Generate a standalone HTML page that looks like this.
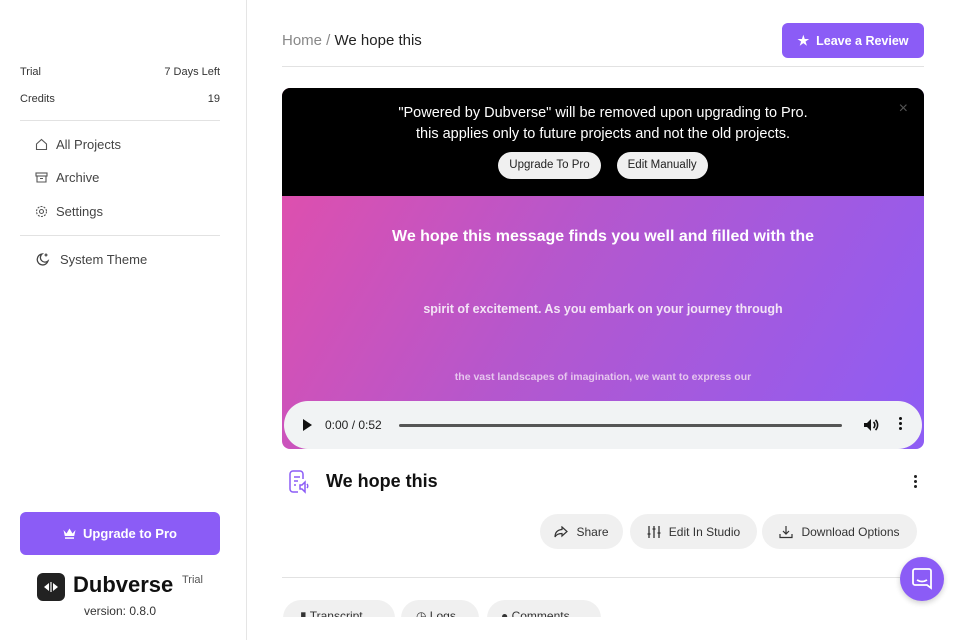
<!DOCTYPE html>
<html><head><meta charset="utf-8"><style>
*{box-sizing:border-box;margin:0;padding:0}
body{width:960px;height:640px;overflow:hidden;background:#fff;font-family:"Liberation Sans",sans-serif;color:#222;position:relative}
.side{position:absolute;left:0;top:0;width:247px;height:640px;border-right:1px solid #e5e5e5}
.row{position:absolute;left:20px;width:200px;font-size:11px;color:#333;display:flex;justify-content:space-between}
.hr{position:absolute;left:20px;width:200px;height:1px;background:#e2e2e2}
.nav{position:absolute;left:35px;font-size:13px;color:#444;display:flex;align-items:center;gap:8px}
.upg{position:absolute;left:20px;top:512px;width:200px;height:43px;background:#8b5cf6;border-radius:6px;color:#fff;font-weight:bold;font-size:13px;display:flex;align-items:center;justify-content:center;gap:7px}
.main{position:absolute;left:282px;width:642px}
.pill{position:absolute;height:35px;border-radius:18px;background:#f0f0f0;font-size:12px;color:#333;display:flex;align-items:center;justify-content:center;gap:8px}
.bb{background:#f0f0f0;color:#222;border-radius:14px;font-size:11.5px;padding:0 11px;height:27px;display:flex;align-items:center}
</style></head><body>
<div class="side">
 <div class="row" style="top:66px"><span>Trial</span><span>7 Days Left</span></div>
 <div class="row" style="top:93px"><span>Credits</span><span>19</span></div>
 <div class="hr" style="top:120px"></div>
 <div class="nav" style="top:137px"><svg width="13" height="13" viewBox="0 0 13 13" fill="none" stroke="#555" stroke-width="1.1"><path d="M1.5 6L6.5 1.5 11.5 6V11.5H1.5Z"/></svg>All Projects</div>
 <div class="nav" style="top:170px"><svg width="13" height="13" viewBox="0 0 13 13" fill="none" stroke="#555" stroke-width="1.1"><rect x="1" y="2" width="11" height="3"/><path d="M2 5v6h9V5M5 7.5h3"/></svg>Archive</div>
 <div class="nav" style="top:204px"><svg width="13" height="13" viewBox="0 0 13 13" fill="none" stroke="#555" stroke-width="1.1"><circle cx="6.5" cy="6.5" r="2"/><circle cx="6.5" cy="6.5" r="5" stroke-dasharray="2 1.2"/></svg>Settings</div>
 <div class="hr" style="top:235px"></div>
 <div class="nav" style="top:252px;gap:10px"><svg width="15" height="15" viewBox="0 0 15 15" fill="none" stroke="#444" stroke-width="1.3"><path d="M7 2a5.5 5.5 0 1 0 6 7A4.5 4.5 0 0 1 7 2Z"/><path d="M11 1.5v3M9.5 3h3"/></svg>System Theme</div>
 <div class="upg"><svg width="13" height="11" viewBox="0 0 13 11" fill="#fff"><path d="M0.5 2l3 3.5L6.5 0.5l3 5 3-3.5-1.3 6H1.8Z"/><rect x="2" y="9.3" width="9" height="1.5"/></svg>Upgrade to Pro</div>
 <div style="position:absolute;left:37px;top:573px;width:28px;height:28px;background:#222;border-radius:6px"><svg width="28" height="28" viewBox="0 0 28 28" fill="#fff"><path d="M12 10v8l-5-4zM16 10v8l5-4z"/><rect x="13.4" y="9" width="1.2" height="10"/></svg></div>
 <div style="position:absolute;left:73px;top:572px;font-size:22px;font-weight:bold;color:#111">Dubverse</div>
 <div style="position:absolute;left:182px;top:574px;font-size:11px;color:#555">Trial</div>
 <div style="position:absolute;left:0;width:240px;text-align:center;top:604px;font-size:12px;color:#333">version: 0.8.0</div>
</div>

<div class="main" style="top:32px;font-size:15px"><span style="color:#888">Home /</span> <span style="color:#222">We hope this</span></div>
<div style="position:absolute;left:782px;top:23px;width:142px;height:35px;background:#8b5cf6;border-radius:6px;color:#fff;font-weight:bold;font-size:12.5px;display:flex;align-items:center;justify-content:center;gap:7px"><span style="font-size:13px">★</span>Leave a Review</div>
<div class="main" style="top:66px;height:1px;background:#e2e2e2"></div>

<div class="main" style="top:88px;height:361px;border-radius:8px;overflow:hidden;background:linear-gradient(120deg,#e54ea8 0%,#b557cd 45%,#8d5df5 100%)">
 <div style="height:108px;background:#000;color:#fff;text-align:center;font-size:14.5px;line-height:21px;padding-top:15px;position:relative">
  "Powered by Dubverse" will be removed upon upgrading to Pro.<br>this applies only to future projects and not the old projects.
  <div style="position:absolute;right:16px;top:10px;color:#555;font-size:16px">×</div>
  <div style="display:flex;justify-content:center;gap:16px;margin-top:7px">
   <span class="bb">Upgrade To Pro</span>
   <span class="bb">Edit Manually</span>
  </div>
 </div>
 <div style="position:absolute;top:140px;width:100%;text-align:center;color:#fff;font-weight:bold;font-size:16px">We hope this message finds you well and filled with the</div>
 <div style="position:absolute;top:214px;width:100%;text-align:center;color:#f3e4f6;font-weight:bold;font-size:12.5px">spirit of excitement. As you embark on your journey through</div>
 <div style="position:absolute;top:283px;width:100%;text-align:center;color:#e6c6ee;font-weight:bold;font-size:10.5px">the vast landscapes of imagination, we want to express our</div>
 <div style="position:absolute;left:2px;right:2px;top:313px;height:48px;background:#f1f3f4;border-radius:24px;font-size:12px;color:#222">
  <div style="position:absolute;left:19px;top:18px;width:0;height:0;border-left:9px solid #111;border-top:6px solid transparent;border-bottom:6px solid transparent"></div>
  <div style="position:absolute;left:41px;top:17px">0:00 / 0:52</div>
  <div style="position:absolute;left:115px;right:80px;top:23px;height:3px;background:#555;border-radius:2px"></div>
  <svg style="position:absolute;right:43px;top:16px" width="16" height="16" viewBox="0 0 16 16"><path d="M1 6h3l4-4v12l-4-4H1z" fill="#111"/><path d="M10.5 5a4 4 0 0 1 0 6M12.5 3a7 7 0 0 1 0 10" stroke="#111" stroke-width="1.6" fill="none"/></svg>
  <div style="position:absolute;right:20px;top:16px;width:3px"><div style="width:3px;height:3px;background:#111;border-radius:2px;margin-bottom:2px"></div><div style="width:3px;height:3px;background:#111;border-radius:2px;margin-bottom:2px"></div><div style="width:3px;height:3px;background:#111;border-radius:2px"></div></div>
 </div>
</div>

<svg style="position:absolute;left:289px;top:470px" width="22" height="24" viewBox="0 0 22 24" fill="none" stroke="#8b5cf6" stroke-width="1.5"><path d="M14 9V4a3 3 0 0 0-3-3H4a3 3 0 0 0-3 3v15a3 3 0 0 0 3 3h5"/><path d="M5 7h6M5 11h4M5 15h2"/><path d="M11 15h2l3-3v10l-3-3h-2z"/><path d="M18 14a3 3 0 0 1 0 4"/></svg>
<div style="position:absolute;left:326px;top:471px;font-size:18px;font-weight:bold;color:#111">We hope this</div>
<div style="position:absolute;left:914px;top:475px;width:3px"><div style="width:3px;height:3px;background:#222;border-radius:2px;margin-bottom:2px"></div><div style="width:3px;height:3px;background:#222;border-radius:2px;margin-bottom:2px"></div><div style="width:3px;height:3px;background:#222;border-radius:2px"></div></div>

<div class="pill" style="left:540px;top:514px;width:83px"><svg width="14" height="12" viewBox="0 0 14 12" fill="none" stroke="#333" stroke-width="1.2"><path d="M8 1l5 4.5L8 10V7.5C4 7.5 2 9 1 11c0-4 2-7 7-7.5z"/></svg>Share</div>
<div class="pill" style="left:630px;top:514px;width:127px"><svg width="14" height="14" viewBox="0 0 14 14" stroke="#333" stroke-width="1.3"><path d="M2 1v12M7 1v12M12 1v12M0.5 9h3M5.5 4h3M10.5 8h3"/></svg>Edit In Studio</div>
<div class="pill" style="left:762px;top:514px;width:155px"><svg width="14" height="14" viewBox="0 0 14 14" fill="none" stroke="#333" stroke-width="1.2"><path d="M7 1v8M4 6l3 3 3-3M1 9v3.5h12V9"/></svg>Download Options</div>

<div class="main" style="top:577px;height:1px;background:#e2e2e2"></div>
<div style="position:absolute;left:283px;top:600px;width:112px;height:40px;border-radius:18px;background:#f0f0f0"></div>
<div style="position:absolute;left:401px;top:600px;width:78px;height:40px;border-radius:18px;background:#f0f0f0"></div>
<div style="position:absolute;left:487px;top:600px;width:114px;height:40px;border-radius:18px;background:#f0f0f0"></div>
<div style="position:absolute;left:300px;top:609px;font-size:12px;color:#333">▮ Transcript</div>
<div style="position:absolute;left:416px;top:609px;font-size:12px;color:#333">◷ Logs</div>
<div style="position:absolute;left:501px;top:609px;font-size:12px;color:#333">● Comments</div>
<div style="position:absolute;left:248px;top:617px;width:712px;height:23px;background:#fff"></div>

<div style="position:absolute;left:900px;top:557px;width:44px;height:44px;border-radius:50%;background:#8b5cf6;box-shadow:0 2px 6px rgba(0,0,0,.2)"><svg style="position:absolute;left:12px;top:11px" width="20" height="22" viewBox="0 0 20 22" fill="none" stroke="#fff" stroke-width="1.8"><path d="M3 1h14a2 2 0 0 1 2 2v17l-4-3H3a2 2 0 0 1-2-2V3a2 2 0 0 1 2-2z"/><path d="M5 12q5 3 10 0"/></svg></div>
</body></html>
